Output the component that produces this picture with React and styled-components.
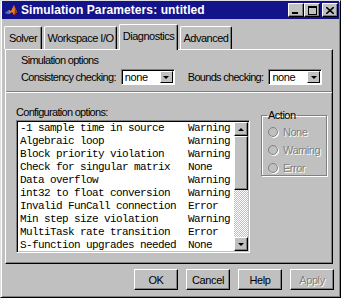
import React from "react";
import styled, { createGlobalStyle } from "styled-components";

const EstiloGlobal = createGlobalStyle`
  html, body { margin: 0; padding: 0; background: #c0c0c0; }
  body { font-family: "Liberation Sans", Arial, sans-serif; font-size: 10px; letter-spacing: -0.5px; color: #000; }
`;

const linhas = [
    ["-1 sample time in source", "Warning"],
    ["Algebraic loop", "Warning"],
    ["Block priority violation", "Warning"],
    ["Check for singular matrix", "None"],
    ["Data overflow", "Warning"],
    ["int32 to float conversion", "Warning"],
    ["Invalid FunCall connection", "Error"],
    ["Min step size violation", "Warning"],
    ["MultiTask rate transition", "Error"],
    ["S-function upgrades needed", "None"],
];

const abas = [
    { nome: "Solver", largura: 38 },
    { nome: "Workspace I/O", largura: 73 },
    { nome: "Diagnostics", largura: 59, ativa: true },
    { nome: "Advanced", largura: 52 },
];

const LogoMatlab = () => (
    <svg width="14" height="14" viewBox="0 0 14 14">
        <path d="M1 10 L5 7 L7 8 L10 2 L13 9 L10 12 L8 9 L5 11 Z" fill="#e8801a" />
        <path d="M10 2 L13 9 L10 12 L11 7 Z" fill="#b02a10" />
        <path d="M1 10 L5 7 L5 11 Z" fill="#3a6ec0" />
    </svg>
);

export default function App() {
    return (
        <>
            <EstiloGlobal />
            <Janela>
                <BarraTitulo>
                    <LogoMatlab />
                    <TextoTitulo>Simulation Parameters: untitled</TextoTitulo>
                    <BotoesJanela>
                        <BotaoJanela>
                            <svg width="8" height="8" viewBox="0 0 8 8"><rect x="0" y="6" width="6" height="2" fill="#000" /></svg>
                        </BotaoJanela>
                        <BotaoJanela>
                            <svg width="9" height="9" viewBox="0 0 9 9"><rect x="0.5" y="0.5" width="8" height="8" fill="none" stroke="#000" /><rect x="0" y="0" width="9" height="2" fill="#000" /></svg>
                        </BotaoJanela>
                        <BotaoJanela $fechar>
                            <svg width="8" height="7" viewBox="0 0 8 7"><path d="M0 0 L8 7 M8 0 L0 7" stroke="#000" strokeWidth="1.6" /></svg>
                        </BotaoJanela>
                    </BotoesJanela>
                </BarraTitulo>

                <LinhaAbas>
                    {abas.map((a) => (
                        <Aba key={a.nome} $largura={a.largura} $ativa={a.ativa}>{a.nome}</Aba>
                    ))}
                </LinhaAbas>

                <Painel>
                    <SecaoSimulacao>
                        <Rotulo>Simulation options</Rotulo>
                        <LinhaOpcoes>
                            <Rotulo>Consistency checking:</Rotulo>
                            <Combo>
                                <ValorCombo>none</ValorCombo>
                                <SetaCombo><Triangulo /></SetaCombo>
                            </Combo>
                            <Rotulo $esquerda={8}>Bounds checking:</Rotulo>
                            <Combo>
                                <ValorCombo>none</ValorCombo>
                                <SetaCombo><Triangulo /></SetaCombo>
                            </Combo>
                        </LinhaOpcoes>
                    </SecaoSimulacao>

                    <SecaoConfig>
                        <ColunaLista>
                            <Rotulo>Configuration options:</Rotulo>
                            <Lista>
                                <Itens>
                                    {linhas.map(([nome, valor]) => (
                                        <Item key={nome}>
                                            <span>{nome}</span>
                                            <span>{valor}</span>
                                        </Item>
                                    ))}
                                </Itens>
                                <BarraRolagem>
                                    <BotaoRolagem><Triangulo $cima /></BotaoRolagem>
                                    <Polegar />
                                    <Trilho />
                                    <BotaoRolagem><Triangulo /></BotaoRolagem>
                                </BarraRolagem>
                            </Lista>
                        </ColunaLista>

                        <GrupoAcao>
                            <Legenda>Action</Legenda>
                            {["None", "Warning", "Error"].map((r) => (
                                <OpcaoRadio key={r}>
                                    <Radio />
                                    <TextoDesativado>{r}</TextoDesativado>
                                </OpcaoRadio>
                            ))}
                        </GrupoAcao>
                    </SecaoConfig>
                </Painel>

                <LinhaBotoes>
                    <Botao>OK</Botao>
                    <Botao>Cancel</Botao>
                    <Botao>Help</Botao>
                    <Botao $desativado>Apply</Botao>
                </LinhaBotoes>
            </Janela>
        </>
    );
}

const Janela = styled.div`
    width: 341px;
    height: 298px;
    box-sizing: border-box;
    background: #c0c0c0;
    border-top: 1px solid #dfdfdf;
    border-left: 1px solid #dfdfdf;
    border-right: 1px solid #000;
    border-bottom: 1px solid #000;
    box-shadow: inset 1px 1px 0 #fff, inset -1px -1px 0 #808080;
    padding: 0 2px 2px 2px;
    display: flex;
    flex-direction: column;
`

const BarraTitulo = styled.div`
    height: 18px;
    margin: 0 -1px;
    background: #14148a;
    display: flex;
    align-items: center;
    padding-left: 2px;
    gap: 3px;
`

const TextoTitulo = styled.span`
    color: #fff;
    font-weight: bold;
    font-size: 12px;
    letter-spacing: 0.1px;
`

const BotoesJanela = styled.div`
    margin-left: auto;
    display: flex;
    padding-right: 1px;
`

const BotaoJanela = styled.div`
    width: 16px;
    height: 14px;
    box-sizing: border-box;
    background: #c0c0c0;
    border-top: 1px solid #fff;
    border-left: 1px solid #fff;
    border-right: 1px solid #000;
    border-bottom: 1px solid #000;
    box-shadow: inset -1px -1px 0 #808080;
    display: flex;
    align-items: center;
    justify-content: center;
    margin-left: ${props => props.$fechar ? "2px" : "0"};
`

const LinhaAbas = styled.div`
    display: flex;
    align-items: flex-end;
    gap: 2px;
    height: 26px;
    margin-top: 4px;
    padding-left: 1px;
`

const Aba = styled.div`
    position: relative;
    z-index: ${props => props.$ativa ? 1 : 0};
    flex-shrink: 0;
    width: ${props => props.$largura}px;
    height: ${props => props.$ativa ? 26 : 23}px;
    margin-bottom: ${props => props.$ativa ? "-1px" : "0"};
    box-sizing: border-box;
    background: #c0c0c0;
    border-top: 1px solid #fff;
    border-left: 1px solid #fff;
    border-right: 1px solid #000;
    box-shadow: inset -1px 0 0 #808080;
    border-radius: 2px 2px 0 0;
    display: flex;
    align-items: center;
    justify-content: center;
    white-space: nowrap;
    font-size: 11px;
    padding-bottom: ${props => props.$ativa ? "3px" : "0"};
`

const Painel = styled.div`
    height: 215px;
    margin: 0 5px 0 2px;
    box-sizing: border-box;
    border-top: 1px solid #fff;
    border-left: 1px solid #fff;
    border-right: 1px solid #000;
    border-bottom: 1px solid #000;
    box-shadow: inset -1px -1px 0 #808080;
    display: flex;
    flex-direction: column;
`

const SecaoSimulacao = styled.div`
    height: 42px;
    box-sizing: border-box;
    border-bottom: 1px solid #808080;
    box-shadow: 0 1px 0 #fff;
    padding: 4px 0 0 15px;
    display: flex;
    flex-direction: column;
    gap: 3px;
`

const LinhaOpcoes = styled.div`
    display: flex;
    align-items: center;
    gap: 5px;
`

const Rotulo = styled.span`
    margin-left: ${props => props.$esquerda || 0}px;
    white-space: nowrap;
    font-size: 11px;
    letter-spacing: -0.7px;
`

const Combo = styled.div`
    flex-shrink: 0;
    width: 54px;
    height: 16px;
    box-sizing: border-box;
    background: #fff;
    border-top: 1px solid #808080;
    border-left: 1px solid #808080;
    border-right: 1px solid #fff;
    border-bottom: 1px solid #fff;
    box-shadow: inset 1px 1px 0 #000;
    display: flex;
    align-items: center;
`

const ValorCombo = styled.span`
    flex: 1;
    padding-left: 3px;
    font-size: 11px;
    letter-spacing: -0.4px;
`

const SetaCombo = styled.div`
    width: 13px;
    height: 12px;
    margin-right: 1px;
    box-sizing: border-box;
    background: #c0c0c0;
    border-top: 1px solid #fff;
    border-left: 1px solid #fff;
    border-right: 1px solid #000;
    border-bottom: 1px solid #000;
    display: flex;
    align-items: center;
    justify-content: center;
`

const Triangulo = styled.div`
    width: 0;
    height: 0;
    border-left: 3px solid transparent;
    border-right: 3px solid transparent;
    border-top: ${props => props.$cima ? "0" : "3px solid #000"};
    border-bottom: ${props => props.$cima ? "3px solid #000" : "0"};
`

const SecaoConfig = styled.div`
    display: flex;
    padding: 14px 0 0 10px;
`

const ColunaLista = styled.div`
    display: flex;
    flex-direction: column;
    gap: 2px;
`

const Lista = styled.div`
    width: 234px;
    height: 133px;
    box-sizing: border-box;
    background: #fff;
    border-top: 1px solid #808080;
    border-left: 1px solid #808080;
    border-right: 1px solid #fff;
    border-bottom: 1px solid #fff;
    box-shadow: inset 1px 1px 0 #000, inset -1px -1px 0 #c0c0c0;
    padding: 1px;
    display: flex;
    overflow: hidden;
`

const Itens = styled.div`
    flex: 1;
    padding-left: 2px;
    font-family: "Liberation Mono", "Courier New", monospace;
    font-size: 11px;
    letter-spacing: -0.6px;
`

const Item = styled.div`
    display: grid;
    grid-template-columns: 168px 1fr;
    height: 13px;
    line-height: 13px;
    white-space: nowrap;
`

const BarraRolagem = styled.div`
    width: 14px;
    display: flex;
    flex-direction: column;
`

const BotaoRolagem = styled.div`
    height: 14px;
    box-sizing: border-box;
    background: #c0c0c0;
    border-top: 1px solid #fff;
    border-left: 1px solid #fff;
    border-right: 1px solid #000;
    border-bottom: 1px solid #000;
    box-shadow: inset -1px -1px 0 #808080;
    display: flex;
    align-items: center;
    justify-content: center;
`

const Polegar = styled(BotaoRolagem)`
    height: 54px;
`

const Trilho = styled.div`
    flex: 1;
    background: repeating-conic-gradient(#c0c0c0 0 25%, #fff 0 50%) 0 0 / 2px 2px;
`

const GrupoAcao = styled.fieldset`
    width: 66px;
    height: 67px;
    box-sizing: border-box;
    margin: 3px 0 0 11px;
    padding: 4px 0 0 6px;
    border: 1px solid #808080;
    box-shadow: 1px 1px 0 #fff, inset 1px 1px 0 #fff;
    display: flex;
    flex-direction: column;
    gap: 5px;
`

const Legenda = styled.legend`
    padding: 0 1px;
    margin-left: -1px;
    font-size: 11px;
    letter-spacing: -0.5px;
`

const OpcaoRadio = styled.div`
    display: flex;
    align-items: center;
    gap: 5px;
    height: 14px;
`

const Radio = styled.div`
    width: 10px;
    height: 10px;
    border-radius: 50%;
    box-sizing: border-box;
    border: 1px solid #808080;
    background: #c0c0c0;
    box-shadow: 1px 1px 0 #fff;
`

const TextoDesativado = styled.span`
    color: #808080;
    text-shadow: 1px 1px 0 #fff;
    font-size: 11px;
    letter-spacing: -0.5px;
`

const LinhaBotoes = styled.div`
    display: flex;
    justify-content: flex-end;
    gap: 8px;
    margin-top: 5px;
    padding-right: 4px;
`

const Botao = styled.div`
    width: 44px;
    height: 21px;
    box-sizing: border-box;
    background: #c0c0c0;
    border-top: 1px solid #fff;
    border-left: 1px solid #fff;
    border-right: 1px solid #000;
    border-bottom: 1px solid #000;
    box-shadow: inset -1px -1px 0 #808080;
    display: flex;
    align-items: center;
    justify-content: center;
    font-size: 11px;
    letter-spacing: -0.4px;
    color: ${props => props.$desativado ? "#808080" : "#000"};
    text-shadow: ${props => props.$desativado ? "1px 1px 0 #fff" : "none"};
`
